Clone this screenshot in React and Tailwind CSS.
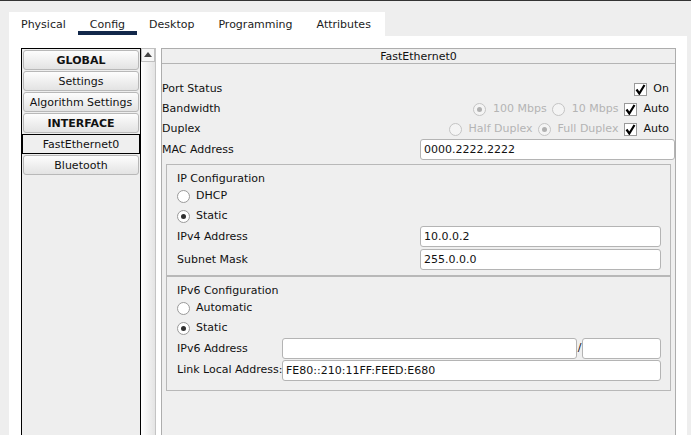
import React from 'react';

const tabs = ['Physical', 'Config', 'Desktop', 'Programming', 'Attributes'];

const sideItems = [
  { label: 'GLOBAL', bold: true },
  { label: 'Settings' },
  { label: 'Algorithm Settings' },
  { label: 'INTERFACE', bold: true },
  { label: 'FastEthernet0', selected: true },
  { label: 'Bluetooth' },
];

const Radio = ({ checked, disabled }) => (
  <span
    className={`w-[13px] h-[13px] rounded-full border flex items-center justify-center shrink-0 ${
      disabled ? 'border-[#c4c4c4] bg-[#f4f4f4]' : 'border-[#9a9a9a] bg-white'
    }`}
  >
    {checked && (
      <span className={`w-[5px] h-[5px] rounded-full ${disabled ? 'bg-[#b0b0b0]' : 'bg-[#303030]'}`} />
    )}
  </span>
);

const Check = () => (
  <span className="w-[13px] h-[13px] border border-[#9a9a9a] bg-white flex items-center justify-center shrink-0">
    <svg width="11" height="11" viewBox="0 0 11 11">
      <path d="M1.5 5.5 L4.3 9.5 L9.5 1" fill="none" stroke="#000" strokeWidth="2.2" />
    </svg>
  </span>
);

const Field = ({ value, className }) => (
  <div className={`h-[21px] bg-white border border-[#b4b4b4] rounded-[3px] flex items-center px-[3px] pt-[1px] text-[#111] ${className}`}>
    {value}
  </div>
);

export default function App() {
  return (
    <div
      className="w-[691px] h-[435px] overflow-hidden bg-[#eeeeee] border-t border-[#333333] flex flex-col text-[11px] text-[#111]"
      style={{ fontFamily: '"DejaVu Sans", Verdana, sans-serif' }}
    >
      {/* Tabs */}
      <div className="pt-[11px] pl-[9px]">
        <div className="w-[376px] h-[24px] bg-white flex">
          {tabs.map((t) => (
            <div key={t} className="relative px-3 pt-[2px] h-full flex items-center text-[#1c1c1c]">
              {t}
              {t === 'Config' && <span className="absolute left-0 right-0 bottom-[1px] h-[4px] bg-[#12284a]" />}
            </div>
          ))}
        </div>
      </div>

      {/* Body */}
      <div className="ml-[9px] w-[678px] flex-1 bg-white pt-[12px] pl-[12px] flex min-h-0">
        {/* side list */}
        <div className="w-[120px] h-full border border-black border-b-0 bg-[#eeeeee] p-[1px] flex flex-col gap-[1px]">
          {sideItems.map((it) => (
            <div
              key={it.label}
              className={`h-[20px] pt-[2px] flex items-center justify-center ${
                it.selected
                  ? 'border border-black bg-[#efefef] -mx-[1px]'
                  : 'border border-[#b8b8b8] rounded-[3px] bg-gradient-to-b from-[#fdfdfd] to-[#e3e3e3]'
              } ${it.bold ? 'font-bold' : ''}`}
            >
              {it.label}
            </div>
          ))}
        </div>

        {/* scrollbar */}
        <div className="w-[15px] h-full border-r border-[#c4c4c4] bg-gradient-to-r from-white to-[#e4e4e4] flex flex-col">
          <div className="h-[14px] border border-[#c0c0c0] bg-[#f6f6f6] flex items-start justify-center pt-[3px]">
            <svg width="8" height="5" viewBox="0 0 8 5">
              <path d="M0 5 L4 0 L8 5 Z" fill="#444" />
            </svg>
          </div>
        </div>

        {/* main panel */}
        <div className="ml-[5px] w-[515px] h-full border border-[#adadad] border-b-0 bg-[#efefef] flex flex-col">
          <div className="h-[15px] pt-[1px] border-b border-[#b4b4b4] flex items-center justify-center leading-none">
            FastEthernet0
          </div>

          <div className="pt-[15px] flex flex-col">
            <div className="h-[20px] pt-[1px] flex items-center pr-[6px]">
              <span className="flex-1">Port Status</span>
              <Check />
              <span className="ml-[6px]">On</span>
            </div>
            <div className="h-[20px] pt-[1px] flex items-center pr-[6px]">
              <span className="flex-1">Bandwidth</span>
              <Radio checked disabled />
              <span className="ml-[7px] text-[#b4b4b4]">100 Mbps</span>
              <span className="ml-[5px]"><Radio disabled /></span>
              <span className="ml-[7px] text-[#b4b4b4]">10 Mbps</span>
              <span className="ml-[6px]"><Check /></span>
              <span className="ml-[6px]">Auto</span>
            </div>
            <div className="h-[20px] pt-[1px] flex items-center pr-[6px]">
              <span className="flex-1">Duplex</span>
              <Radio disabled />
              <span className="ml-[7px] text-[#b4b4b4]">Half Duplex</span>
              <span className="ml-[5px]"><Radio checked disabled /></span>
              <span className="ml-[7px] text-[#b4b4b4]">Full Duplex</span>
              <span className="ml-[6px]"><Check /></span>
              <span className="ml-[6px]">Auto</span>
            </div>
            <div className="flex items-center">
              <span className="w-[258px] pt-[1px]">MAC Address</span>
              <Field value="0000.2222.2222" className="w-[255px] h-[20px]" />
            </div>

            {/* IP configuration */}
            <div className="mt-[4px] mx-[4px] border border-[#b8b8b8] pt-[6px] pb-[5px] pl-[10px] pr-[9px] flex flex-col">
              <div className="h-[16px] flex items-center">IP Configuration</div>
              <div className="h-[19px] flex items-center gap-[6px]">
                <Radio />
                <span>DHCP</span>
              </div>
              <div className="h-[20px] flex items-center gap-[6px]">
                <Radio checked />
                <span>Static</span>
              </div>
              <div className="flex items-center">
                <span className="w-[243px] pt-[2px]">IPv4 Address</span>
                <Field value="10.0.0.2" className="flex-1" />
              </div>
              <div className="mt-[2px] flex items-center">
                <span className="w-[243px] pt-[2px]">Subnet Mask</span>
                <Field value="255.0.0.0" className="flex-1" />
              </div>
            </div>

            {/* IPv6 configuration */}
            <div className="mx-[4px] border border-[#b8b8b8] pt-[6px] pb-[9px] pl-[10px] pr-[9px] flex flex-col">
              <div className="h-[16px] flex items-center">IPv6 Configuration</div>
              <div className="h-[19px] flex items-center gap-[6px]">
                <Radio />
                <span>Automatic</span>
              </div>
              <div className="h-[20px] flex items-center gap-[6px]">
                <Radio checked />
                <span>Static</span>
              </div>
              <div className="flex items-center">
                <span className="w-[105px] pt-[2px]">IPv6 Address</span>
                <Field value="" className="w-[295px]" />
                <span className="w-[5px] text-center">/</span>
                <Field value="" className="flex-1" />
              </div>
              <div className="mt-[1px] flex items-center">
                <span className="w-[105px] whitespace-nowrap">Link Local Address:</span>
                <Field value="FE80::210:11FF:FEED:E680" className="flex-1 h-[20px] pt-0" />
              </div>
            </div>
          </div>
        </div>
      </div>
    </div>
  );
}
